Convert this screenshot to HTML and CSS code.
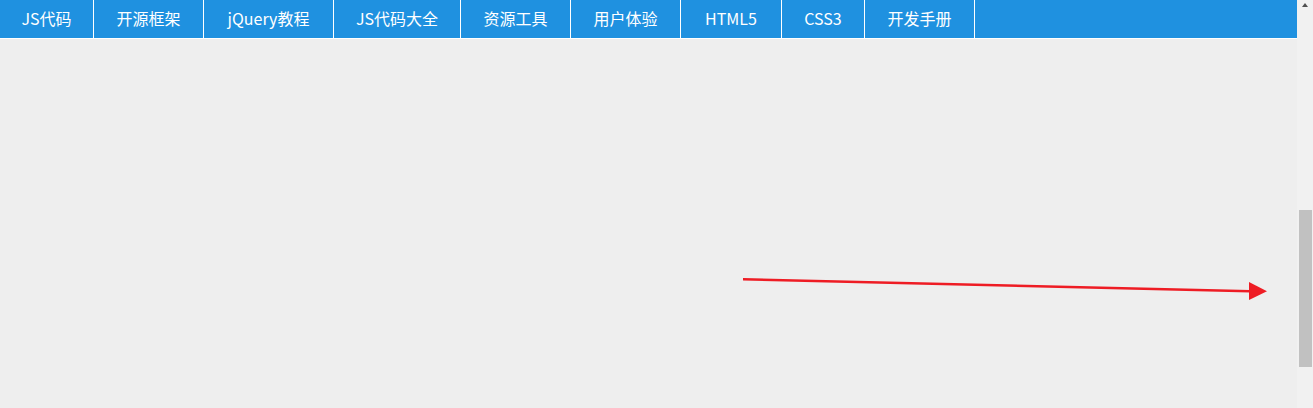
FILE: index.html
```html
<!DOCTYPE html>
<html lang="zh-CN">
<head>
<meta charset="utf-8">
<title>导航</title>
<link rel="stylesheet" href="styles.css">
</head>
<body>
<div class="window">
  <div class="page">
    <nav class="nav">
      <a class="nav-item w1" href="#">JS代码</a>
      <a class="nav-item w2" href="#">开源框架</a>
      <a class="nav-item w3" href="#">jQuery教程</a>
      <a class="nav-item w4" href="#">JS代码大全</a>
      <a class="nav-item w2" href="#">资源工具</a>
      <a class="nav-item w2" href="#">用户体验</a>
      <a class="nav-item w5" href="#">HTML5</a>
      <a class="nav-item w6" href="#">CSS3</a>
      <a class="nav-item w2" href="#">开发手册</a>
    </nav>
    <main class="content">
      <svg class="pointer" width="1297" height="369" viewBox="0 39 1297 369" xmlns="http://www.w3.org/2000/svg">
        <line x1="743" y1="279.3" x2="1250" y2="291.2" stroke="#ee1c24" stroke-width="2.6"/>
        <polygon points="1249,282 1267,291.2 1249,300" fill="#ee1c24"/>
      </svg>
    </main>
  </div>
  <div class="scrollbar">
    <div class="scroll-btn"><span class="scroll-up"></span></div>
    <div class="scroll-track">
      <div class="scroll-thumb"></div>
    </div>
  </div>
</div>
</body>
</html>
```
FILE: styles.css
```css
html, body {
  margin: 0;
  padding: 0;
  height: 100%;
  overflow: hidden;
}
body {
  font-family: "Noto Sans CJK SC", "Noto Sans", sans-serif;
  background: #eeeeee;
}
.window {
  display: flex;
  width: 1313px;
  height: 408px;
}
.page {
  width: 1297px;
  display: flex;
  flex-direction: column;
  background: #eeeeee;
}
.nav {
  display: flex;
  height: 38px;
  background: #1f91e0;
  border-bottom: 1px solid #ffffff;
}
.nav-item {
  display: block;
  box-sizing: border-box;
  height: 38px;
  line-height: 36px;
  text-align: center;
  color: #ffffff;
  font-size: 16px;
  text-decoration: none;
  border-right: 1px solid #ffffff;
  white-space: nowrap;
}
.w1 { width: 94px; }
.w2 { width: 110px; }
.w3 { width: 130px; }
.w4 { width: 127px; }
.w5 { width: 101px; }
.w6 { width: 83px; }
.content {
  flex: 1;
  position: relative;
}
.pointer {
  position: absolute;
  left: 0;
  top: 0;
  display: block;
}
.scrollbar {
  width: 16px;
  display: flex;
  flex-direction: column;
  background: #f1f1f1;
}
.scroll-btn {
  height: 16px;
  display: flex;
  justify-content: center;
  padding-top: 3px;
  box-sizing: border-box;
}
.scroll-up {
  width: 0;
  height: 0;
  border-left: 3.5px solid transparent;
  border-right: 3.5px solid transparent;
  border-bottom: 4px solid #505050;
}
.scroll-track {
  flex: 1;
  padding-top: 194px;
  padding-left: 2px;
  padding-right: 1px;
}
.scroll-thumb {
  height: 157px;
  background: #c1c1c1;
}
```
